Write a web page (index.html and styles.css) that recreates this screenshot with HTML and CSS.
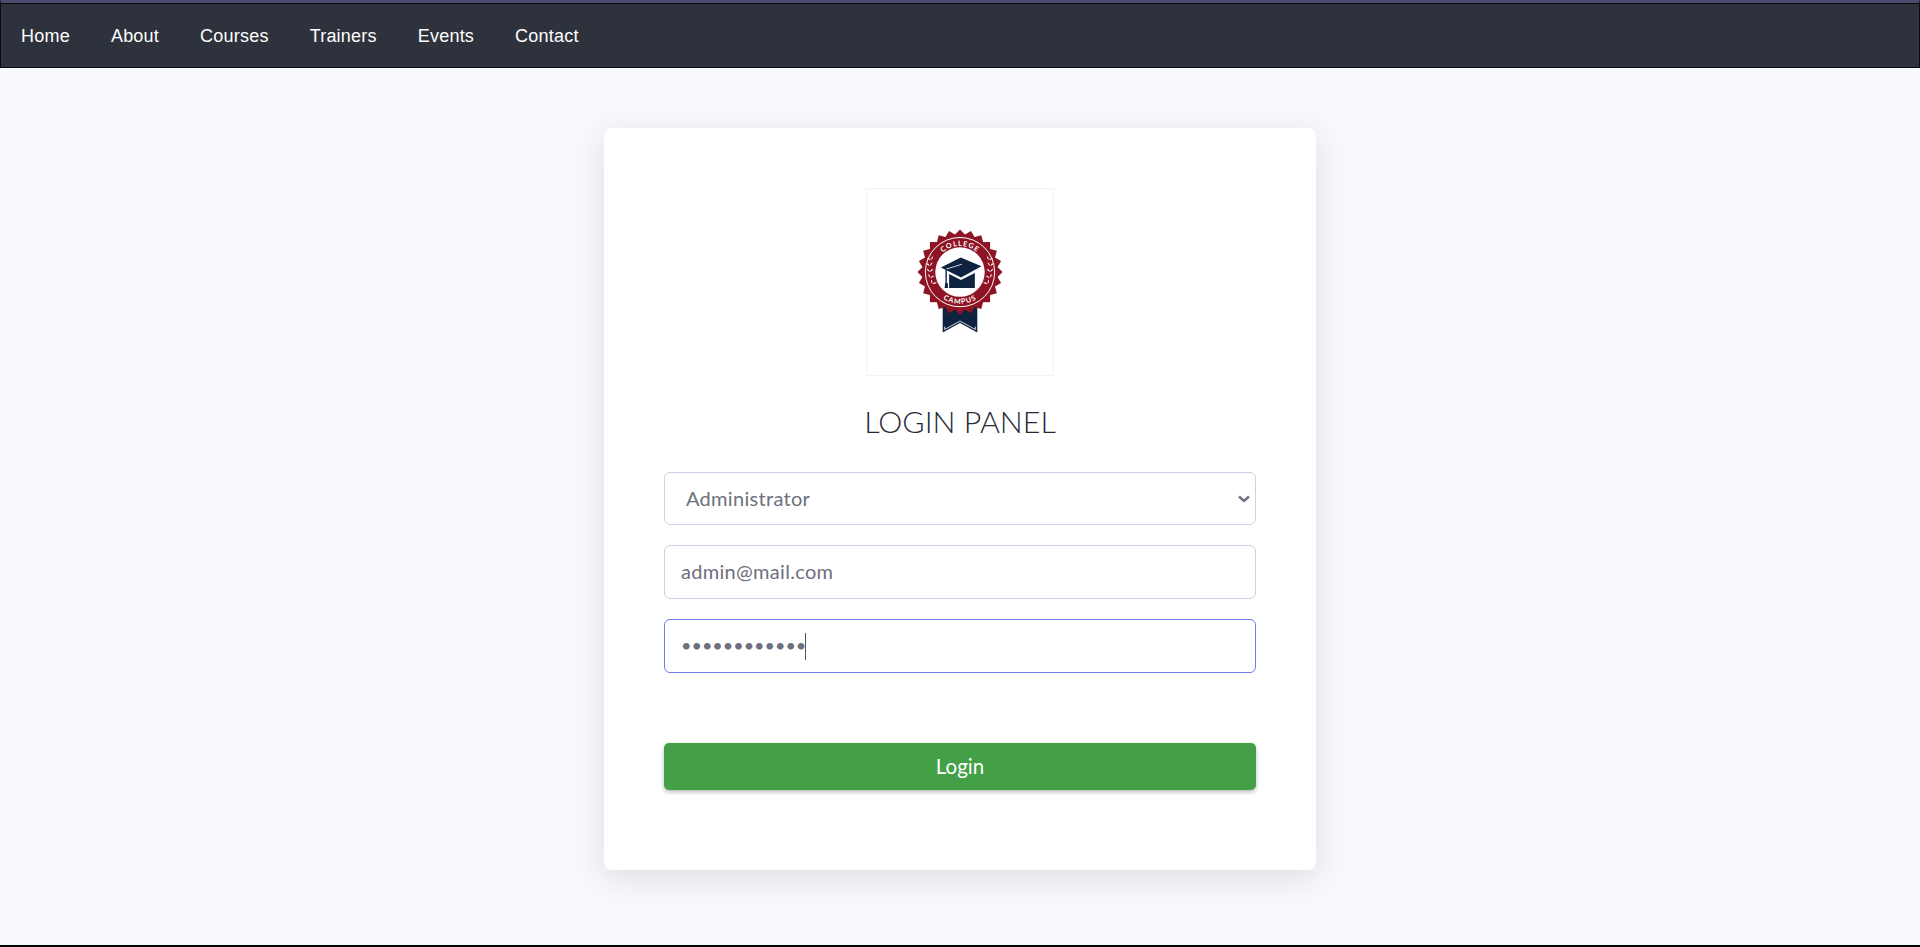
FILE: index.html
```html
<!DOCTYPE html>
<html lang="en">
<head>
<meta charset="utf-8">
<title>Login Panel</title>
<link rel="stylesheet" href="styles.css">
</head>
<body>
<nav class="topbar">
  <a class="nav-link" href="#">Home</a>
  <a class="nav-link" href="#">About</a>
  <a class="nav-link" href="#">Courses</a>
  <a class="nav-link" href="#">Trainers</a>
  <a class="nav-link" href="#">Events</a>
  <a class="nav-link" href="#">Contact</a>
</nav>
<main class="page">
  <section class="card">
    <div class="logo-box">
      <svg class="logo" viewBox="0 0 188 188" width="186" height="186" aria-label="College Campus">
        <defs>
          <path id="arcTop" d="M67.5 84 A26.5 26.5 0 0 1 120.5 84"/>
          <path id="arcBottom" d="M62 84 A32 32 0 0 0 126 84"/>
          <path id="laurelL" d="M0 0 q-2.6 -1.2 -3.4 -3.6 q2.8 0.6 3.4 3.6 Z M0 0 q2.6 -1.2 3.4 -3.6 q-2.8 0.6 -3.4 3.6 Z"/>
        </defs>
        <path d="M76.5 110 H111.5 V145 L94 135.5 L76.5 145 Z" fill="#0d2340"/>
        <path d="M78.5 139 V142 L94 133.5 L109.5 142 V139" fill="none" stroke="#fff" stroke-width="0.8"/>
        <g fill="#8e1424">
          <rect x="63.6" y="53.6" width="60.8" height="60.8"/>
          <rect x="63.6" y="53.6" width="60.8" height="60.8" transform="rotate(15 94 84)"/>
          <rect x="63.6" y="53.6" width="60.8" height="60.8" transform="rotate(30 94 84)"/>
          <rect x="63.6" y="53.6" width="60.8" height="60.8" transform="rotate(45 94 84)"/>
          <rect x="63.6" y="53.6" width="60.8" height="60.8" transform="rotate(60 94 84)"/>
          <rect x="63.6" y="53.6" width="60.8" height="60.8" transform="rotate(75 94 84)"/>
        </g>
        <circle cx="94" cy="84" r="35" fill="none" stroke="#fff" stroke-width="1"/>
        <circle cx="94" cy="84" r="25" fill="#fff"/>
        <text class="badge-text"><textPath href="#arcTop" startOffset="50%">COLLEGE</textPath></text>
        <text class="badge-text"><textPath href="#arcBottom" startOffset="50%">CAMPUS</textPath></text>
        <g fill="#fff">
          <use href="#laurelL" transform="translate(65 72) rotate(-20)"/>
          <use href="#laurelL" transform="translate(63.5 78) rotate(-8)"/>
          <use href="#laurelL" transform="translate(63.5 84) rotate(2)"/>
          <use href="#laurelL" transform="translate(64 90) rotate(14)"/>
          <use href="#laurelL" transform="translate(66 96) rotate(28)"/>
          <use href="#laurelL" transform="translate(123 72) rotate(20)"/>
          <use href="#laurelL" transform="translate(124.5 78) rotate(8)"/>
          <use href="#laurelL" transform="translate(124.5 84) rotate(-2)"/>
          <use href="#laurelL" transform="translate(124 90) rotate(-14)"/>
          <use href="#laurelL" transform="translate(122 96) rotate(-28)"/>
        </g>
        <path d="M83 86 L95 92 L109 85 V100 H83 Z" fill="#0d2340"/>
        <path d="M74.7 79.3 L94.7 69.3 L115.7 78 L95 89.5 Z" fill="#0d2340"/>
        <path d="M80 81 L96 76" stroke="#fff" stroke-width="0.8" fill="none"/>
        <path d="M80 81 V96" stroke="#0d2340" stroke-width="1.4" fill="none"/>
        <path d="M79 95 H81.5 L82 100 H78.5 Z" fill="#0d2340"/>
      </svg>
    </div>
    <h1 class="title">LOGIN PANEL</h1>
    <form class="form">
      <select class="field field-select">
        <option>Administrator</option>
      </select>
      <input class="field" type="email" value="admin@mail.com">
      <div class="password-wrap">
        <input class="field field-password" type="password" value="............">
        <span class="caret"></span>
      </div>
      <button class="login-btn" type="button">Login</button>
    </form>
  </section>
</main>
</body>
</html>
```
FILE: styles.css
```css
* { box-sizing: border-box; }
html, body { margin: 0; height: 100%; }
body {
  display: flex;
  flex-direction: column;
  height: 947px;
  overflow: hidden;
  background: #f8f9fd;
  border-bottom: 2px solid #000;
  font-family: "Lato", "Liberation Sans", sans-serif;
}
.topbar {
  display: flex;
  align-items: center;
  gap: 41px;
  height: 68px;
  padding: 1px 20px 0;
  background: #2e323d;
  border: 1px solid #0b0c10;
  border-top: 3px solid #4d4b72;
  box-shadow: inset 0 1px 0 #0b0c10;
}
.nav-link {
  color: #fff;
  font: 18px/1 "Liberation Sans", Arial, sans-serif;
  letter-spacing: 0.22px;
  text-decoration: none;
}
.page {
  flex: 1;
  display: flex;
  justify-content: center;
  padding-top: 60px;
}
.card {
  width: 712px;
  height: 742px;
  padding: 60px;
  background: #fff;
  border-radius: 8px;
  box-shadow: 0 8px 32px rgba(30, 40, 70, 0.13);
}
.logo-box {
  width: 188px;
  height: 188px;
  margin: 0 auto;
  border: 1px solid #f3f3f3;
}
.logo { display: block; }
.badge-text {
  fill: #fff;
  font: 700 7.2px "Lato", sans-serif;
  letter-spacing: 1px;
  text-anchor: middle;
}
.title {
  margin: 28px 0 33px;
  color: #262935;
  font-size: 30.4px;
  font-weight: 300;
  line-height: 35px;
  text-align: center;
}
.form {
  display: flex;
  flex-direction: column;
  gap: 20px;
}
.field {
  display: block;
  width: 100%;
  height: 54px;
  padding: 0 16px 2px;
  background: #fff;
  border: 1px solid #cfcfe4;
  border-radius: 6px;
  color: #6e707e;
  font: 400 20px "Lato", sans-serif;
  letter-spacing: 0.3px;
  outline: none;
}
.field-select {
  height: 53px;
  padding-left: 21px;
  appearance: none;
  background-image: url("data:image/svg+xml,%3Csvg xmlns='http://www.w3.org/2000/svg' width='12' height='8'%3E%3Cpath d='M1 1.5 L6 6 L11 1.5' fill='none' stroke='%236e707e' stroke-width='2.4'/%3E%3C/svg%3E");
  background-repeat: no-repeat;
  background-position: right 5px center;
}
.field-password {
  border-color: #6a7de8;
  font-size: 18px;
  letter-spacing: 0;
}
.password-wrap { position: relative; }
.caret {
  position: absolute;
  left: 141px;
  top: 14px;
  width: 1px;
  height: 27px;
  background: #555;
}
.login-btn {
  height: 47px;
  margin-top: 50px;
  padding-bottom: 3px;
  background: #43a047;
  border: 0;
  border-radius: 5px;
  box-shadow: 0 2px 4px rgba(0, 0, 0, 0.28);
  color: #fff;
  font: 400 20.5px "Lato", sans-serif;
}
```
